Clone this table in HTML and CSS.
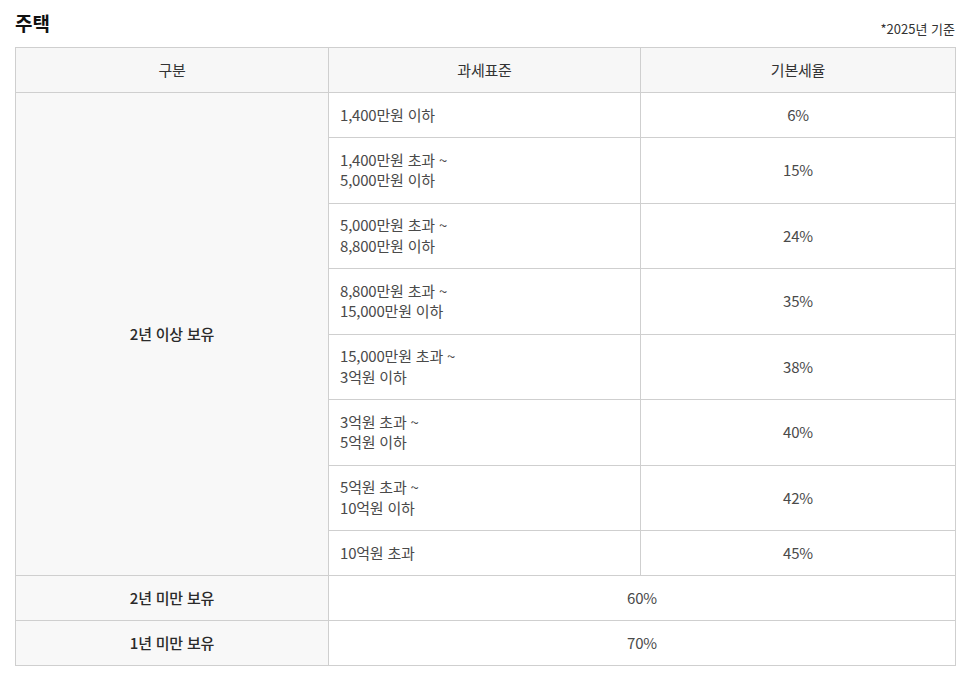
FILE: index.html
```html
<!DOCTYPE html>
<html lang="ko">
<head>
<meta charset="utf-8">
<link rel="stylesheet" href="styles.css">
</head>
<body>
<div class="wrap">
  <div class="head">
    <h2 class="title">주택</h2>
    <span class="note">*2025년 기준</span>
  </div>
  <table class="tax">
    <colgroup><col class="c1"><col class="c2"><col class="c3"></colgroup>
    <thead>
      <tr><th>구분</th><th>과세표준</th><th>기본세율</th></tr>
    </thead>
    <tbody>
      <tr><td class="cat" rowspan="8">2년 이상 보유</td><td class="base">1,400만원 이하</td><td class="rate">6%</td></tr>
      <tr><td class="base">1,400만원 초과 ~<br>5,000만원 이하</td><td class="rate">15%</td></tr>
      <tr><td class="base">5,000만원 초과 ~<br>8,800만원 이하</td><td class="rate">24%</td></tr>
      <tr><td class="base">8,800만원 초과 ~<br>15,000만원 이하</td><td class="rate">35%</td></tr>
      <tr><td class="base">15,000만원 초과 ~<br>3억원 이하</td><td class="rate">38%</td></tr>
      <tr><td class="base">3억원 초과 ~<br>5억원 이하</td><td class="rate">40%</td></tr>
      <tr><td class="base">5억원 초과 ~<br>10억원 이하</td><td class="rate">42%</td></tr>
      <tr><td class="base">10억원 초과</td><td class="rate">45%</td></tr>
      <tr><td class="cat">2년 미만 보유</td><td class="rate" colspan="2">60%</td></tr>
      <tr><td class="cat">1년 미만 보유</td><td class="rate" colspan="2">70%</td></tr>
    </tbody>
  </table>
</div>
</body>
</html>
```
FILE: styles.css
```css
html, body {
  margin: 0;
  padding: 0;
  background: #fff;
}
body {
  font-family: "Noto Sans CJK KR", "Noto Sans", sans-serif;
  color: #4a4a4a;
}
.wrap {
  padding: 10px 15px 0 15px;
  width: 940px;
}
.head {
  display: flex;
  justify-content: space-between;
  align-items: flex-end;
  height: 37px;
}
.title {
  margin: 0;
  font-size: 19px;
  font-weight: 700;
  color: #111;
  line-height: 26px;
  align-self: flex-start;
}
.note {
  font-size: 13px;
  color: #333;
  line-height: 18px;
  margin-bottom: 9px;
}
.tax {
  width: 940px;
  border-collapse: collapse;
  table-layout: fixed;
  font-size: 15px;
  letter-spacing: -0.2px;
}
.c1 { width: 313px; }
.c2 { width: 312px; }
.c3 { width: 315px; }
.tax th, .tax td {
  border: 1px solid #cfcfcf;
  padding: 11.75px 11px;
  line-height: 20.5px;
  vertical-align: middle;
}
.tax th {
  background: #f7f7f7;
  font-weight: 400;
  color: #333;
  text-align: center;
}
.tax td.cat {
  background: #f8f8f8;
  text-align: center;
  color: #2a2a2a;
  font-weight: 500;
}
.tax td.base {
  text-align: left;
}
.tax td.rate {
  text-align: center;
}
```
